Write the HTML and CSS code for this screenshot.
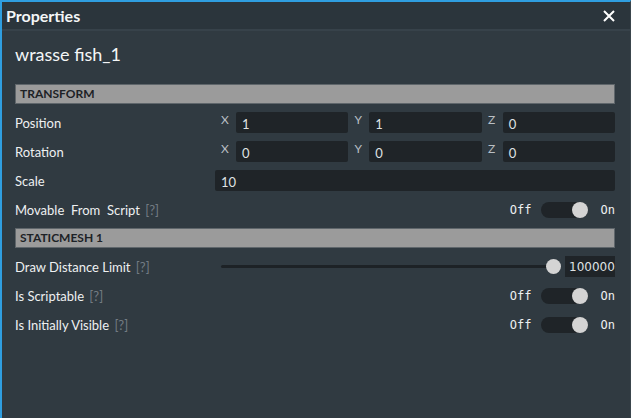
FILE: index.html
```html
<!DOCTYPE html>
<html>
<head>
<meta charset="utf-8">
<link rel="stylesheet" href="styles.css">
</head>
<body>
<div class="window">
  <div class="titlebar">
    <span class="title">Properties</span>
    <svg class="close" width="12" height="12" viewBox="0 0 12 12"><path d="M1 1 L11 11 M11 1 L1 11" stroke="#ffffff" stroke-width="2"/></svg>
  </div>
  <div class="content">
    <div class="objname">wrasse fish_1</div>
    <div class="section">TRANSFORM</div>
    <div class="row">
      <div class="label">Position</div>
      <div class="control vec">
        <span class="axis">X</span><div class="input">1</div>
        <span class="axis">Y</span><div class="input">1</div>
        <span class="axis">Z</span><div class="input">0</div>
      </div>
    </div>
    <div class="row">
      <div class="label">Rotation</div>
      <div class="control vec">
        <span class="axis">X</span><div class="input">0</div>
        <span class="axis">Y</span><div class="input">0</div>
        <span class="axis">Z</span><div class="input">0</div>
      </div>
    </div>
    <div class="row">
      <div class="label">Scale</div>
      <div class="control"><div class="input wide">10</div></div>
    </div>
    <div class="row">
      <div class="label">Movable&nbsp; From&nbsp; Script <span class="help">[?]</span></div>
      <div class="toggle-wrap"><span class="tt">Off</span><span class="toggle"><span class="knob"></span></span><span class="tt">On</span></div>
    </div>
    <div class="section">STATICMESH 1</div>
    <div class="row">
      <div class="label">Draw Distance Limit <span class="help">[?]</span></div>
      <div class="control slider-row">
        <div class="slider"><div class="track"></div><div class="sknob"></div></div>
        <div class="input num">100000</div>
      </div>
    </div>
    <div class="row">
      <div class="label">Is Scriptable <span class="help">[?]</span></div>
      <div class="toggle-wrap"><span class="tt">Off</span><span class="toggle"><span class="knob"></span></span><span class="tt">On</span></div>
    </div>
    <div class="row">
      <div class="label">Is Initially Visible <span class="help">[?]</span></div>
      <div class="toggle-wrap"><span class="tt">Off</span><span class="toggle"><span class="knob"></span></span><span class="tt">On</span></div>
    </div>
  </div>
</div>
</body>
</html>
```
FILE: styles.css
```css
html, body {
  margin: 0;
  padding: 0;
  background: #303a41;
}
.window {
  width: 631px;
  height: 418px;
  box-sizing: border-box;
  border-top: 2px solid #2f9ee0;
  border-left: 2px solid #2f9ee0;
  border-right: 1px solid #3a454c;
  background: #303a41;
  font-family: Lato, "Noto Sans", sans-serif;
  color: #eef0f1;
  display: flex;
  flex-direction: column;
}
.titlebar {
  height: 27px;
  background: #2b353c;
  border-bottom: 2px solid #37424a;
  display: flex;
  align-items: center;
  justify-content: space-between;
  padding: 0 15px 0 4px;
}
.title {
  font-weight: bold;
  font-size: 16px;
  color: #f4f6f7;
}
.close {
  display: block;
}
.content {
  padding: 0 15px 0 13px;
  display: flex;
  flex-direction: column;
  gap: 8px;
}
.objname {
  font-size: 18px;
  height: 24px;
  line-height: 24px;
  margin-top: 11px;
  margin-bottom: 10px;
  color: #f4f6f7;
}
.section {
  height: 20px;
  box-sizing: border-box;
  background: #9b9b9b;
  border: 1px solid #5f666b;
  color: #1d2226;
  font-weight: bold;
  font-size: 12px;
  line-height: 18px;
  padding-left: 4px;
}
.row {
  height: 21px;
  display: flex;
  align-items: center;
  justify-content: space-between;
}
.label {
  font-size: 13px;
  color: #eef0f1;
}
.help {
  color: #737c83;
  margin-left: 2px;
}
.control {
  width: 400px;
  height: 21px;
}
.vec {
  display: grid;
  grid-template-columns: 21px 1fr 21px 1fr 21px 1fr;
}
.axis {
  font-size: 12px;
  color: #b9bfc4;
  text-align: center;
  line-height: 15px;
  padding-right: 1px;
}
.input {
  background: #1f2428;
  border-radius: 2px;
  height: 21px;
  box-sizing: border-box;
  padding: 4px 0 0 6px;
  font-size: 13px;
  line-height: 17px;
  color: #dfe2e4;
  overflow: hidden;
  white-space: nowrap;
}
.input.wide {
  width: 100%;
}
.slider-row {
  display: flex;
  align-items: center;
  gap: 4px;
}
.slider {
  flex: 1;
  position: relative;
  height: 21px;
  margin-left: 6px;
}
.track {
  position: absolute;
  left: 0;
  right: 0;
  top: 9px;
  height: 3px;
  background: #1d2226;
  border-radius: 2px;
}
.sknob {
  position: absolute;
  right: 0;
  top: 3px;
  width: 15px;
  height: 15px;
  border-radius: 50%;
  background: #d4d4d4;
}
.input.num {
  width: 50px;
  padding-left: 4px;
  padding-top: 3px;
  border-radius: 0;
  font-family: "DejaVu Sans", sans-serif;
  font-size: 12px;
}
.toggle-wrap {
  display: flex;
  align-items: center;
}
.tt {
  font-family: "DejaVu Sans Mono", monospace;
  font-size: 12px;
  color: #eef0f1;
}
.toggle {
  width: 47px;
  height: 16px;
  border-radius: 8px;
  background: #1f2428;
  margin: 0 13px 0 9px;
  position: relative;
}
.knob {
  position: absolute;
  right: 0;
  top: 0;
  width: 16px;
  height: 16px;
  border-radius: 50%;
  background: #d4d4d4;
}
```
